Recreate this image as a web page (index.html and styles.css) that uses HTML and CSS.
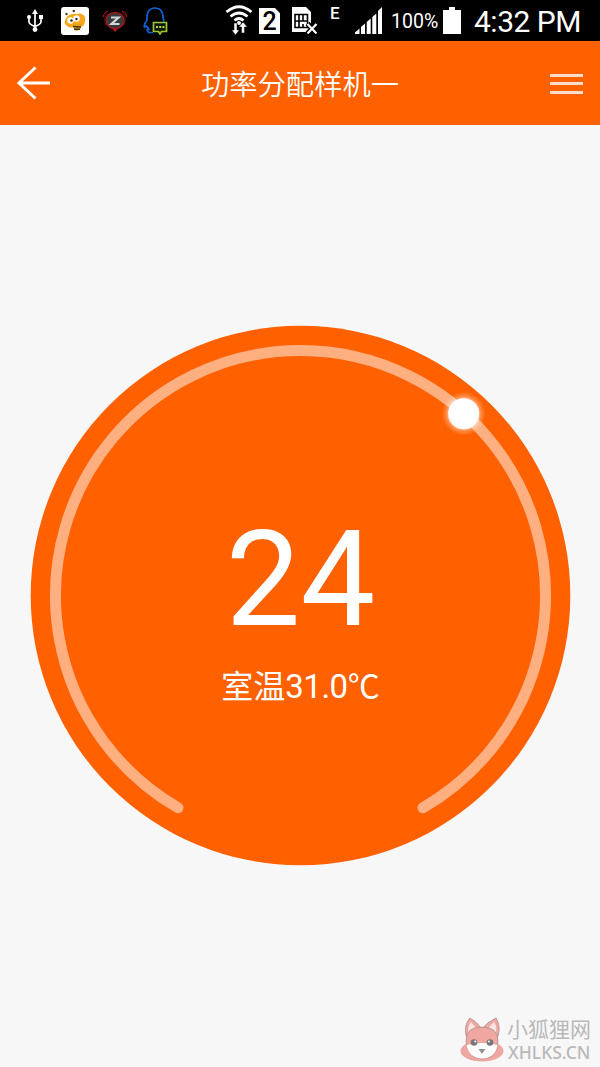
FILE: index.html
```html
<!DOCTYPE html>
<html lang="zh-CN">
<head>
  <meta charset="UTF-8" />
  <meta name="viewport" content="width=device-width, initial-scale=1.0" />
  <title>功率分配样机一</title>
  <link rel="stylesheet" href="styles.css">
</head>
<body>
  <div class="status-bar">
    <svg class="usb" width="18" height="24" viewBox="0 0 18 24" fill="none" stroke="#fff" stroke-width="1.7">
      <path d="M9 3v17M3 8v5q0 2 6 4.500q6-2.500 6-4.500V8" />
      <path d="M9 0l3 5H6z" fill="#fff" stroke="none" />
      <circle cx="9" cy="20.500" r="2.400" fill="#fff" stroke="none" />
      <circle cx="3" cy="8" r="2" fill="#fff" stroke="none" />
      <path d="M13 6h4v4h-4z" fill="#fff" stroke="none" />
    </svg>
    <svg class="bee" width="28" height="28" viewBox="0 0 28 28">
      <rect width="28" height="28" rx="3" fill="#fff" />
      <circle cx="5.500" cy="7" r="1.200" fill="#50350c" /><circle cx="12.800" cy="4" r="1.200" fill="#50350c" />
      <path d="M5 11q-3 5 1 8q4 3 9 0h7q3-4 2-9q-3-5-8-3Q9 6 5 11z" fill="#f7a719" />
      <path d="M12 17h9q0 5-5 7q-4-1-4-7z" fill="#eaa11b" />
      <path d="M12 19.500l8 .5M13 22.300h6" stroke="#4a3510" stroke-width="1.600" />
      <circle cx="9.500" cy="13.500" r="3.200" fill="#fff" /><circle cx="15.500" cy="11.500" r="3.200" fill="#fff" />
      <circle cx="10.500" cy="13.500" r="1.200" fill="#222" /><circle cx="15.500" cy="12" r="1.200" fill="#222" />
    </svg>
    <svg class="alarm" width="26" height="24" viewBox="0 0 26 24" fill="none">
      <ellipse cx="13" cy="11.500" rx="9" ry="8" fill="#343a3d" stroke="#ad1519" stroke-width="1.300" />
      <path d="M6 2Q2 4 1 8M20 2q4 2 5 6" stroke="#9b1519" stroke-width="1.200" />
      <path d="M4.500 5Q1 11 5 17M21.500 5q3.500 6-.5 12" stroke="#6b1013" stroke-width="1" />
      <path d="M10 19.500h6l-3 3.500z" fill="#b5181c" />
      <path d="M9 8.500h7.500l-7 6.500h8" stroke="#d5d5d5" stroke-width="2.200" />
    </svg>
    <svg class="qq" width="26" height="28" viewBox="0 0 26 28" fill="none">
      <path d="M10 25.500H5.500L4 23l2-1-2.500-3-2 1q-1-3 2.500-6.500Q3 1 12 1q8 0 8 9.500l1 4" stroke="#0b65d8" stroke-width="1.700" />
      <path d="M10.500 15.500h13v9h-5L17 27l-1.500-2.500h-5z" fill="#10180a" stroke="#9bc52a" stroke-width="1.700" />
      <path d="M13 20h2M16.200 20h2M19.400 20h2" stroke="#b3d945" stroke-width="1.800" />
    </svg>
    <svg class="wifi" width="28" height="30" viewBox="0 0 28 30" fill="none" stroke="#fff">
      <path d="M1.500 7q12.500-10.500 25 0M5.500 11.500q8.500-7 17 0M9.500 15.500q4.500-4 9 0" stroke-width="2.700" />
      <circle cx="14" cy="18" r="2" fill="#fff" stroke="none" />
      <path d="M9 18h3v7h2.300L10.500 30l-3.800-5H9z M16.500 28h3v-6h2.800L18 17l-4.300 5h2.800z" fill="#fff" stroke="#000" stroke-width=".5" />
    </svg>
    <div class="sim-number">2</div>
    <svg class="sim-off" width="27" height="28" viewBox="0 0 27 28">
      <path d="M1 0h14l5 5v20H1z" fill="#fff" />
      <path d="M4 7.500h12.500v13H4zM4 14h12M8 7v13M12 7v7M12 17v4" fill="none" stroke="#000" stroke-width="1.600" />
      <path d="M16.500 16.500l9 10M25.500 16.500l-9 10" stroke="#000" stroke-width="5" />
      <path d="M16.500 17l9 9.500M25.500 17l-9 9.500" stroke="#fff" stroke-width="2.200" />
    </svg>
    <div class="network">E</div>
    <svg class="signal" width="28" height="27" viewBox="0 0 28 27" fill="#fff">
      <path d="M0 27v-1.500l4.500-4V27zM6 27v-7l4-3.500V27zM11.700 27V15l4-3.500V27zM17.300 27v-17l4-3.500V27zM23 27V4l4-4v27z" />
    </svg>
    <div class="percent">100%</div>
    <svg class="battery" width="18" height="27" viewBox="0 0 18 27">
      <path d="M6 0h6v3h6v24H0V3h6z" fill="#fff" />
    </svg>
    <div class="clock">4:32 PM</div>
  </div>

  <div class="title-bar">
    <svg width="34" height="34" viewBox="0 0 34 34" fill="none" stroke="#fff" stroke-width="3">
      <path d="M34 17H2.500M19.500 1.500L3 17l16.500 15.500" />
    </svg>
    <h1>功率分配样机一</h1>
    <div class="menu">
      <span></span>
      <span></span>
      <span></span>
    </div>
  </div>

  <div class="content">
    <div class="dial">
      <svg class="dial-ring" width="541" height="541" viewBox="0 0 541 541">
        <defs>
          <radialGradient id="glow">
            <stop offset="0.6" stop-color="#fff" stop-opacity="0.750" />
            <stop offset="0.8" stop-color="#fff" stop-opacity="0.250" />
            <stop offset="1" stop-color="#fff" stop-opacity="0" />
          </radialGradient>
        </defs>
        <circle cx="270.500" cy="270.500" r="269.800" fill="#ff6000" />
        <path d="M148 482.700A245 245 0 1 1 393 482.700" fill="none" stroke="#ffaf80" stroke-width="11" stroke-linecap="round" />
        <circle cx="433.700" cy="88.700" r="22" fill="url(#glow)" />
        <circle cx="433.700" cy="88.700" r="15.500" fill="#fff" />
      </svg>
      <div class="reading">
        <div class="target">24</div>
        <div class="room">室温<span>31.0</span>℃</div>
      </div>
    </div>
  </div>

  <div class="watermark">
    <svg width="44" height="46" viewBox="0 0 44 46">
      <ellipse cx="22" cy="34" rx="21.500" ry="10.500" fill="#f0a6a1" />
      <g stroke="#a98e8c" stroke-width="0.800">
        <path d="M6 19Q4 7 10 1q7 4 12 11Q27 5 36 1q5 8 2 18z" fill="#f0a6a1" />
        <path d="M8 15q0-7 3-10l6 7zM27 12l7-7q3 4 2 11z" fill="#f8e4e1" stroke="none" />
        <path d="M6 24q0-14 16-14t16 14q0 17-16 18Q7 41 6 24z" fill="#f0a6a1" />
      </g>
      <path d="M6.500 28q7-2 15.500-2t15.500 2q-2 13-15.500 13.500Q9 41 6.500 28z" fill="#fff" />
      <circle cx="14" cy="25.500" r="3.300" fill="#77777b" /><circle cx="30" cy="25.500" r="3.300" fill="#77777b" />
      <circle cx="15.300" cy="24.500" r="1" fill="#fff" /><circle cx="29" cy="24.500" r="1" fill="#fff" />
      <path d="M18.500 32h7L22 37z" fill="#8b9693" />
    </svg>
    <div class="watermark-text">
      <div class="site-name">小狐狸网</div>
      <div class="site-url">XHLKS.CN</div>
    </div>
  </div>
</body>
</html>
```
FILE: styles.css
```css
:root {
  --bg: #f7f7f7;
  --primary: #ff6000;
}

* {
  box-sizing: border-box;
}

body {
  margin: 0;
  height: 1067px;
  display: flex;
  flex-direction: column;
  overflow: hidden;
  font-family: Roboto, "Noto Sans CJK SC", sans-serif;
  background-color: var(--bg);
  color: #fff;
}

.status-bar {
  height: 41px;
  padding-left: 26px;
  display: flex;
  flex-shrink: 0;
  align-items: flex-start;
  background: #000;
  white-space: nowrap;
}

.status-bar > * {
  flex-shrink: 0;
}

.usb {
  margin: 9px 17px 0 0;
}

.bee {
  margin: 7px 13px 0 0;
}

.alarm {
  margin: 9px 15px 0 0;
}

.qq {
  margin: 7px 56px 0 0;
}

.wifi {
  margin: 5px 6px 0 0;
}

.sim-number {
  width: 21px;
  height: 26px;
  margin: 8px 11px 0 0;
  background: #fff;
  color: #000;
  font-size: 25px;
  font-weight: 500;
  line-height: 27px;
  text-align: center;
  clip-path: polygon(0 0, 76% 0, 100% 20%, 100% 100%, 0 100%);
}

.sim-off {
  margin: 7px 12px 0 0;
}

.network {
  width: 13px;
  margin: 4px 12px 0 0;
  font-size: 17px;
  font-weight: 500;
  line-height: 19px;
}

.signal {
  margin: 7px 8px 0 0;
}

.percent {
  width: 52px;
  margin-top: 10px;
  font-size: 19.5px;
  line-height: 24px;
}

.battery {
  margin: 7px 13px 0 0;
}

.clock {
  font-size: 30px;
  line-height: 44px;
  letter-spacing: -0.5px;
}

.title-bar {
  height: 84px;
  padding: 0 17px 0 16px;
  display: flex;
  flex-shrink: 0;
  align-items: center;
  justify-content: space-between;
  background: var(--primary);
}

.title-bar h1 {
  margin: 0;
  padding-top: 6px;
  font-size: 28.3px;
  font-weight: 350;
  line-height: 40px;
}

.menu {
  width: 33px;
  padding-top: 1px;
  display: grid;
  gap: 5.5px;
}

.menu span {
  height: 3px;
  background: #ffdfcb;
}

.content {
  flex: 1;
  display: flex;
  justify-content: center;
  padding: 200px 0 0 1px;
}

.dial {
  width: 541px;
  height: 541px;
  display: grid;
}

.dial-ring,
.reading {
  grid-area: 1 / 1;
}

.reading {
  z-index: 1;
  padding-top: 182px;
  text-align: center;
}

.target {
  font-size: 133px;
  line-height: 146px;
}

.room {
  margin-top: 12px;
  font-size: 32px;
  font-weight: 400;
  line-height: 44px;
}

.room span {
  font-size: 33px;
  letter-spacing: -0.5px;
}

.watermark {
  display: flex;
  justify-content: flex-end;
  align-items: flex-start;
  height: 50px;
  padding-right: 9px;
  gap: 3px;
  color: #b9b9b9;
}

.site-name {
  padding-top: 1px;
  font-size: 21px;
  line-height: 25px;
}

.site-url {
  padding-left: 1px;
  font-family: "Noto Sans", sans-serif;
  font-size: 17.5px;
  font-weight: 500;
  line-height: 18px;
}
```
